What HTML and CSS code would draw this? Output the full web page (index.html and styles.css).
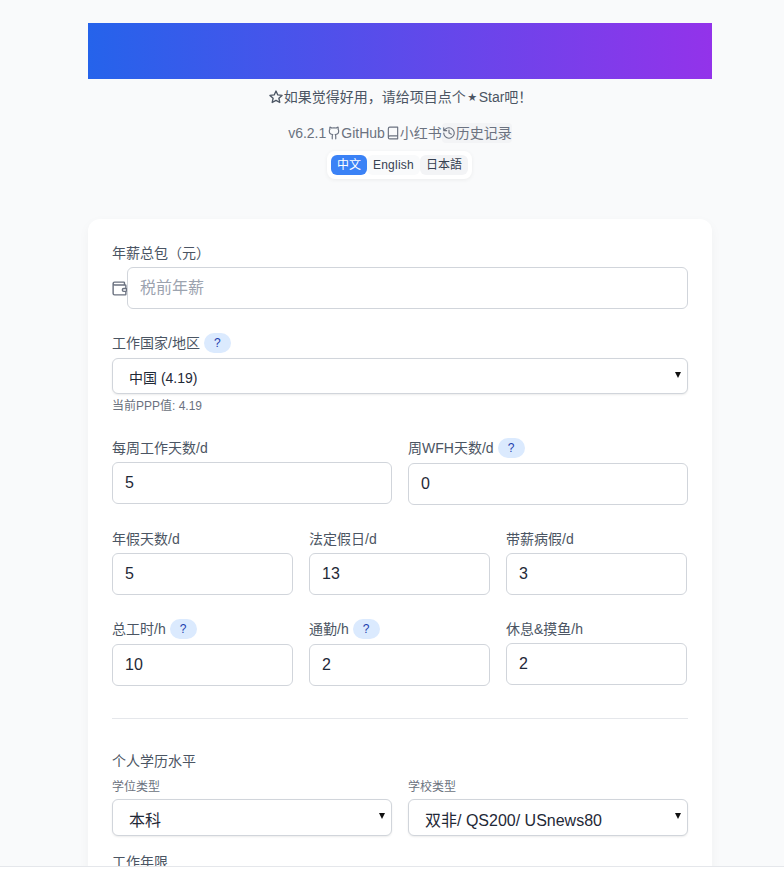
FILE: index.html
```html
<!DOCTYPE html>
<html lang="zh">
<head>
<meta charset="utf-8">
<title>offer</title>
<link rel="stylesheet" href="styles.css">
</head>
<body>
<main class="page">
  <div class="banner"></div>
  <p class="ask">
    <svg class="ico-star" viewBox="0 0 24 24" width="16" height="16"><path d="M12 3l2.700 5.900 6.400.7-4.800 4.300 1.400 6.300L12 17l-5.700 3.200 1.400-6.300-4.800-4.300 6.400-.7z"/></svg><span>如果觉得好用，请给项目点个</span><span class="mini-star">★</span><span>Star吧！</span>
  </p>
  <nav class="links">
    <span>v6.2.1</span>
    <a class="link link-first"><svg class="ico" viewBox="0 0 24 24" width="14" height="14"><path d="M15 22v-4a4.800 4.800 0 0 0-1-3.500c3 0 6-2 6-5.500.1-1.300-.3-2.500-1-3.500.3-1.100.3-2.300 0-3.500 0 0-1 0-3 1.500-2.600-.5-5.400-.5-8 0C6 2 5 2 5 2c-.3 1.200-.3 2.400 0 3.500A5.400 5.400 0 0 0 4 9c0 3.500 3 5.500 6 5.500-.4.500-.7 1-.8 1.700-.2.600-.3 1.200-.2 1.800v4"/></svg>GitHub</a>
    <a class="link"><svg class="ico" viewBox="0 0 24 24" width="14" height="14"><path d="M4 19.500v-15A2.500 2.500 0 0 1 6.500 2H20v20H6.500a2.500 2.500 0 0 1 0-5H20"/></svg>小红书</a>
    <a class="link link-active"><svg class="ico" viewBox="0 0 24 24" width="14" height="14"><path d="M3 12a9 9 0 1 0 9-9 9.750 9.750 0 0 0-6.740 2.740L3 8M3 3v5h5M12 7v5l4 2"/></svg>历史记录</a>
  </nav>
  <div class="lang-wrap">
    <div class="langs">
      <button class="lang lang-on">中文</button>
      <button class="lang lang-faint">English</button>
      <button class="lang lang-soft">日本語</button>
    </div>
  </div>

  <section class="card">
    <div class="field">
      <label class="label">年薪总包（元）</label>
      <div class="with-icon">
        <svg class="ico wallet" viewBox="0 0 24 24" width="17" height="17"><path d="M19 7V4a1 1 0 0 0-1-1H5a2 2 0 0 0 0 4h15a1 1 0 0 1 1 1v4h-3a2 2 0 0 0 0 4h3a1 1 0 0 0 1-1v-2a1 1 0 0 0-1-1M3 5v14a2 2 0 0 0 2 2h15a1 1 0 0 0 1-1v-4"/></svg>
        <input class="input" placeholder="税前年薪">
      </div>
    </div>

    <div class="field">
      <label class="label">工作国家/地区<span class="badge">?</span></label>
      <div class="select-wrap">
        <select class="select select-small"><option>中国 (4.19)</option></select>
      </div>
      <p class="hint">当前PPP值: 4.19</p>
    </div>

    <div class="grid grid-2">
      <div><label class="label">每周工作天数/d</label><input class="input" value="5"></div>
      <div><label class="label">周WFH天数/d<span class="badge">?</span></label><input class="input" value="0"></div>
    </div>

    <div class="grid grid-3">
      <div><label class="label">年假天数/d</label><input class="input" value="5"></div>
      <div><label class="label">法定假日/d</label><input class="input" value="13"></div>
      <div><label class="label">带薪病假/d</label><input class="input" value="3"></div>
    </div>

    <div class="grid grid-3">
      <div><label class="label">总工时/h<span class="badge">?</span></label><input class="input" value="10"></div>
      <div><label class="label">通勤/h<span class="badge">?</span></label><input class="input" value="2"></div>
      <div><label class="label">休息&amp;摸鱼/h</label><input class="input" value="2"></div>
    </div>

    <hr class="rule">

    <div class="edu">
      <div class="label edu-title">个人学历水平</div>
      <div class="grid grid-2 edu-grid">
        <div><label class="sublabel">学位类型</label><div class="select-wrap"><select class="select"><option>本科</option></select></div></div>
        <div><label class="sublabel">学校类型</label><div class="select-wrap"><select class="select"><option>双非/ QS200/ USnews80</option></select></div></div>
      </div>
      <label class="label years">工作年限</label>
    </div>
  </section>
</main>
<div class="bottom-edge"></div>
</body>
</html>
```
FILE: styles.css
```css
* { box-sizing: border-box; }
html, body { margin: 0; height: 869px; overflow: hidden; }
body {
  background: #f9fafb;
  color: #4b5563;
  font-family: "Liberation Sans", "Noto Sans CJK SC", sans-serif;
  font-size: 14px;
  line-height: 20px;
}
.page { width: 624px; margin-left: 88px; padding-top: 23px; }
.banner { height: 56px; background: linear-gradient(90deg, #2563eb, #9333ea); }
.ask {
  margin: 8px 0 0;
  height: 20px;
  display: flex;
  justify-content: center;
  align-items: center;
  color: #4b5563;
}
.ico-star { fill: none; stroke: #4b5563; stroke-width: 2; stroke-linejoin: round; }
.mini-star { font-size: 9px; margin: 0 2px; color: #4b5563; }
.links {
  margin-top: 16px;
  height: 20px;
  display: flex;
  justify-content: center;
  align-items: center;
  color: #6b7280;
}
.link { display: flex; align-items: center; color: #6b7280; }
.link-first { margin: 0 1px; }
.link-active { background: #f3f4f6; border-radius: 4px; }
.ico { fill: none; stroke: #6b7280; stroke-width: 2; stroke-linecap: round; stroke-linejoin: round; }
.lang-wrap { margin-top: 8px; padding-right: 1px; display: flex; justify-content: center; }
.langs {
  display: flex;
  padding: 4px;
  background: #fff;
  border-radius: 8px;
  box-shadow: 0 1px 4px rgba(0, 0, 0, .06);
}
.lang {
  height: 20px;
  padding: 0 6px;
  border: 0;
  border-radius: 6px;
  background: transparent;
  color: #374151;
  font: 12px/20px "Liberation Sans", "Noto Sans CJK SC", sans-serif;
}
.lang-on { background: #3b82f6; color: #fff; }
.lang-faint { background: #f9fafb; letter-spacing: .25px; }
.lang-soft { background: #f3f4f6; }
.card {
  margin-top: 40px;
  padding: 24px 24px 40px;
  background: #fff;
  border-radius: 12px;
  box-shadow: 0 4px 12px rgba(0, 0, 0, .04);
}
.field { margin-bottom: 24px; }
.label { display: block; margin-bottom: 4px; color: #4b5563; }
.with-icon { display: flex; align-items: center; }
.wallet { flex: none; margin: 0 -1px; }
.input {
  display: block;
  width: 100%;
  height: 42px;
  padding: 0 12px;
  border: 1px solid #d1d5db;
  border-radius: 6px;
  background: #fff;
  color: #1f2937;
  font: 16px "Liberation Sans", "Noto Sans CJK SC", sans-serif;
  outline: 0;
}
.input::placeholder { color: #9ca3af; }
.badge {
  display: inline-block;
  width: 27px;
  height: 20px;
  margin-left: 4px;
  border-radius: 10px;
  background: #dbeafe;
  color: #1e40af;
  font-size: 12px;
  line-height: 20px;
  text-align: center;
  vertical-align: top;
}
.label:has(.badge) { height: 21px; }
.select-wrap { position: relative; }
.select-wrap::after {
  content: "";
  position: absolute;
  right: 7px;
  top: 14px;
  border-left: 3px solid transparent;
  border-right: 3px solid transparent;
  border-top: 6px solid #111;
}
.select {
  display: block;
  width: 100%;
  height: 37px;
  padding: 6px 16px 0;
  border: 1px solid #d1d5db;
  border-radius: 6px;
  background: #fff;
  box-shadow: 0 1px 2px rgba(0, 0, 0, .08);
  color: #1f2937;
  font: 16px "Liberation Sans", "Noto Sans CJK SC", sans-serif;
  appearance: none;
}
.select-small { height: 36px; padding-top: 4px; font-size: 14px; }
.hint { margin: 4px 0 0; color: #6b7280; font-size: 12px; line-height: 16px; }
.grid { display: grid; column-gap: 16px; align-items: start; margin-bottom: 24px; }
.grid-2 { grid-template-columns: 280px 280px; }
.grid-3 { grid-template-columns: 181px 181px 181px; }
.rule { margin: 32px 0; border: 0; border-top: 1px solid #e5e7eb; }
.edu-title { margin-bottom: 8px; }
.sublabel { display: block; margin-bottom: 4px; color: #6b7280; font-size: 12px; line-height: 16px; }
.edu-grid { margin-bottom: 16px; }
.bottom-edge {
  position: fixed;
  left: 0;
  right: 0;
  bottom: 0;
  height: 3px;
  background: #fff;
  border-top: 1px solid #e5e7eb;
}
```
